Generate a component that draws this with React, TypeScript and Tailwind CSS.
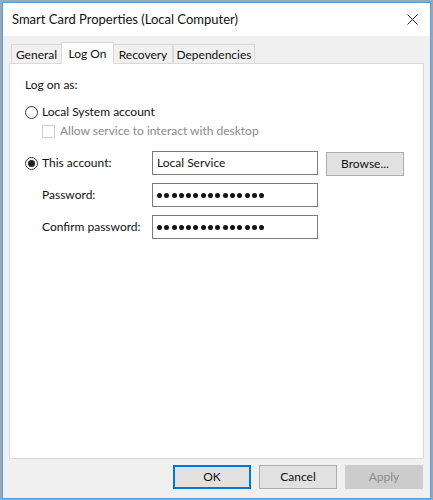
import React from 'react';

const font = { fontFamily: 'Lato, "Noto Sans", sans-serif' };

const Radio = ({ checked }: { checked?: boolean }) => (
  <span className="w-[13px] h-[13px] rounded-full border border-[#333] bg-white flex items-center justify-center shrink-0">
    {checked && <span className="w-[7px] h-[7px] rounded-full bg-[#222]" />}
  </span>
);

const Field = ({ value, dots }: { value: string; dots?: boolean }) => (
  <div className="w-[166px] h-[24px] border border-[#7a7a7a] bg-white px-[4px] flex items-center text-[12px] text-[#111]">
    {dots ? (
      <span className="flex gap-[2.3px]">
        {Array.from({ length: 15 }).map((_, i) => (
          <span key={i} className="w-[5px] h-[5px] rounded-full bg-[#111]" />
        ))}
      </span>
    ) : (
      value
    )}
  </div>
);

const Button = ({ label, primary, disabled }: { label: string; primary?: boolean; disabled?: boolean }) => (
  <div
    className={
      'w-[78px] h-[24px] flex items-center justify-center text-[12px] ' +
      (primary
        ? 'border-2 border-[#0078d7] bg-[#e1e1e1] text-[#111]'
        : disabled
        ? 'border border-[#cccccc] bg-[#cccccc] text-[#8d8d8d]'
        : 'border border-[#adadad] bg-[#e1e1e1] text-[#111]')
    }
  >
    {label}
  </div>
);

export default function App() {
  const tabs = ['General', 'Log On', 'Recovery', 'Dependencies'];
  const widths = ['w-[51px]', 'w-[53px]', 'w-[60px]', 'w-[82px]'];

  return (
    <div className="w-[433px] h-[500px] bg-[#9aa7b5] pl-[2px] pt-[2px]" style={font}>
      <div className="w-[429px] h-[497px] border border-[#4f9ee6] bg-[#f0f0f0] flex flex-col">
        <div className="h-[33px] bg-white flex items-center justify-between pl-[9px] pr-[12px]">
          <span className="text-[13px] text-[#111]">Smart Card Properties (Local Computer)</span>
          <svg width="11" height="11" viewBox="0 0 11 11" className="stroke-[#222]">
            <path d="M0.5 0.5 L10.5 10.5 M10.5 0.5 L0.5 10.5" strokeWidth="1" />
          </svg>
        </div>

        <div className="px-[6px] pt-[6px] flex flex-col">
          <div className="flex items-end h-[22px] pl-[2px]">
            {tabs.map((t, i) =>
              i === 1 ? (
                <div
                  key={t}
                  className={widths[i] + ' h-[22px] -mx-[1px] z-10 border border-b-0 border-[#d9d9d9] bg-white text-[12px] text-[#111] flex items-start justify-center pt-[2px]'}
                >
                  {t}
                </div>
              ) : (
                <div
                  key={t}
                  className={widths[i] + ' h-[20px] border border-b-0 border-[#d9d9d9] bg-[#f0f0f0] text-[12px] text-[#111] flex items-center justify-center'}
                >
                  {t}
                </div>
              )
            )}
          </div>
          <div className="h-[396px] border border-[#d9d9d9] bg-white -mt-px pl-[15px] pt-[13px] text-[12px] text-[#111]">
            <div className="h-[16px] leading-[16px]">Log on as:</div>
            <div className="mt-[11px] flex items-center gap-[4px] h-[16px]">
              <Radio />
              <span>Local System account</span>
            </div>
            <div className="mt-[3px] pl-[17px] flex items-center gap-[5px] h-[16px] text-[#8a8a8a]">
              <span className="w-[13px] h-[13px] border border-[#cfcfcf] bg-white" />
              <span>Allow service to interact with desktop</span>
            </div>
            <div className="mt-[12px] flex items-center h-[24px]">
              <div className="w-[127px] flex items-center gap-[4px]">
                <Radio checked />
                <span>This account:</span>
              </div>
              <Field value="Local Service" />
              <div className="ml-[8px] mt-[1px] w-[78px] h-[24px] border border-[#adadad] bg-[#e1e1e1] flex items-center justify-center">Browse...</div>
            </div>
            <div className="mt-[8px] flex items-center h-[24px]">
              <span className="w-[127px] pl-[17px]">Password:</span>
              <Field value="" dots />
            </div>
            <div className="mt-[8px] flex items-center h-[24px]">
              <span className="w-[127px] pl-[17px]">Confirm password:</span>
              <Field value="" dots />
            </div>
          </div>
          <div className="flex justify-end gap-[8px] mt-[6px] pr-[1px]">
            <Button label="OK" primary />
            <Button label="Cancel" />
            <Button label="Apply" disabled />
          </div>
        </div>
      </div>
    </div>
  );
}
